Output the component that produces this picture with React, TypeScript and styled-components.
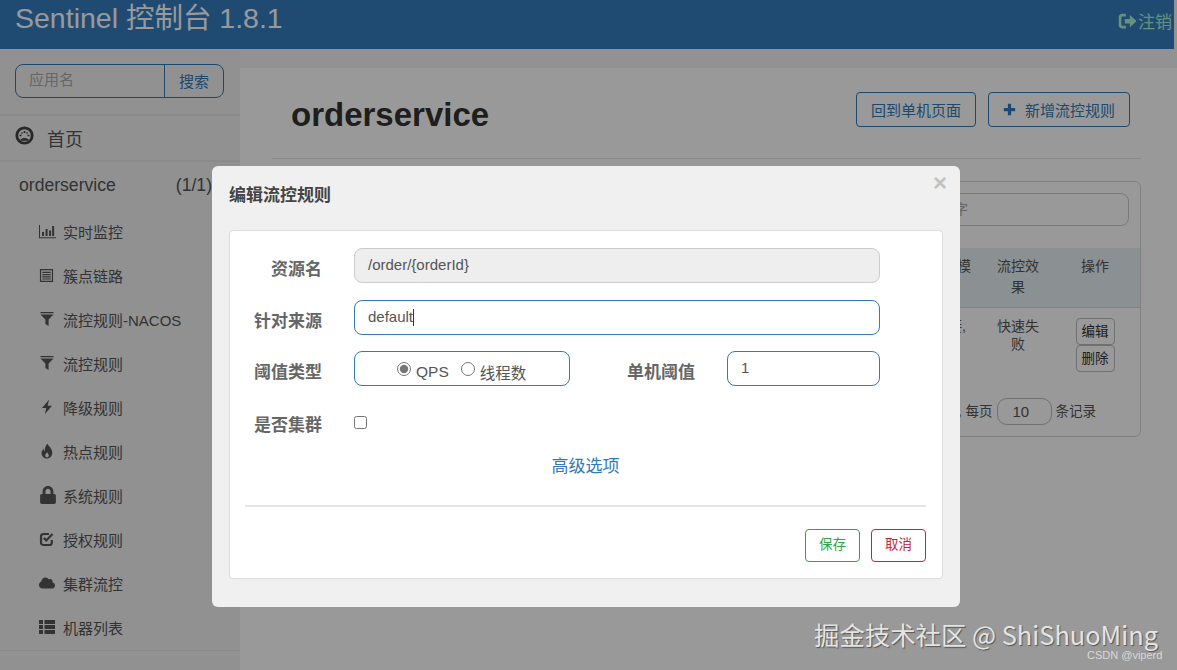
import React from 'react';
import styled, { createGlobalStyle } from 'styled-components';
import { FaLock, FaCloud } from 'react-icons/fa';

const FONT = `"Liberation Sans", "Noto Sans CJK SC", sans-serif`;

const Global = createGlobalStyle`
  html, body { margin: 0; padding: 0; }
  body { font-family: ${FONT}; background: #fff; overflow: hidden; }
  * { box-sizing: border-box; }
`;

const Page = styled.div`
  position: relative;
  width: 1177px;
  height: 670px;
  overflow: hidden;
  display: flex;
  flex-direction: column;
  background: #f4f4f4;
`;
const Navbar = styled.header`
  height: 49px;
  margin-right: 3px;
  padding: 0 2px 0 15px;
  background: #347cbf;
  display: flex;
  align-items: flex-start;
  justify-content: space-between;
  flex-shrink: 0;
`;
const Brand = styled.div`
  font-size: 28.5px;
  line-height: 37px;
  color: #fff;
`;
const Logout = styled.div`
  display: flex;
  align-items: center;
  gap: 2px;
  margin-top: 2px;
  height: 36px;
  font-size: 17px;
  color: #aef0d2;
`;
const Body = styled.div`
  flex: 1;
  display: flex;
  min-height: 0;
`;
const Sidebar = styled.aside`
  width: 240px;
  flex-shrink: 0;
  background: #f2f2f2;
  display: flex;
  flex-direction: column;
`;
const SearchBox = styled.div`
  display: flex;
  height: 34px;
  margin: 15px 16px 16px 15px;
  border: 1px solid #337ab7;
  border-radius: 8px;
  font-size: 15px;
`;
const SearchInput = styled.div`
  width: 149px;
  padding-left: 13px;
  line-height: 29px;
  color: #aaa;
  border-right: 1px solid #337ab7;
`;
const SearchBtn = styled.div`
  flex: 1;
  text-align: center;
  line-height: 33px;
  color: #337ab7;
`;
const HomeRow = styled.div`
  height: 48px;
  border-top: 2px solid #e8e8e8;
  border-bottom: 2px solid #e8e8e8;
  display: flex;
  align-items: center;
  padding-left: 15px;
  gap: 13px;
  font-size: 18px;
  color: #555;
  svg { margin-top: -5px; }
`;
const AppRow = styled.div`
  height: 47px;
  display: flex;
  align-items: center;
  justify-content: space-between;
  padding: 0 28px 0 19px;
  font-size: 17.6px;
  color: #555;
`;
const Menu = styled.nav`
  display: flex;
  flex-direction: column;
  padding-bottom: 1px;
  border-bottom: 1px solid #e4e4e4;
`;
const MenuItem = styled.div`
  height: 44px;
  display: flex;
  align-items: center;
  padding-left: 39px;
  font-size: 15px;
  color: #555;
`;
const MenuIcon = styled.span`
  width: 24px;
  display: flex;
  align-items: center;
  color: #555;
`;
const Main = styled.main`
  flex: 1;
  margin-top: 19px;
  background: #fff;
  padding: 0 36px 0 32px;
`;
const Header = styled.div`
  height: 71px;
  margin-top: 20px;
  padding-left: 19px;
  padding-right: 11px;
  border-bottom: 1px solid #e4e4e4;
  display: flex;
  justify-content: space-between;
`;
const Title = styled.h1`
  margin: 0;
  padding-top: 7px;
  font-size: 33px;
  line-height: 40px;
  font-weight: 700;
  color: #333;
`;
const Actions = styled.div`
  display: flex;
  gap: 12px;
  margin-top: 4px;
`;
const OutlineBtn = styled.div`
  height: 35px;
  padding: 0 14px;
  display: flex;
  align-items: center;
  gap: 9px;
  font-size: 15px;
  color: #337ab7;
  border: 1px solid #337ab7;
  border-radius: 4px;
`;
const Panel = styled.section`
  margin-top: 22px;
  height: 256px;
  border: 1px solid #d6d6d6;
  border-radius: 6px;
  display: flex;
  flex-direction: column;
`;
const PanelSearch = styled.div`
  height: 33px;
  margin: 11px 11px 22px 11px;
  padding-right: 160px;
  border: 1px solid #ccc;
  border-radius: 8px;
  text-align: right;
  font-size: 14px;
  line-height: 31px;
  color: #aaa;
`;
const TableRow = styled.div<{ $head?: boolean }>`
  display: grid;
  grid-template-columns: 1fr 60px 76px 78px 6px;
  font-size: 14px;
  line-height: ${p => (p.$head ? '21px' : '18px')};
  color: #555;
  text-align: center;
  height: ${p => (p.$head ? '60px' : '90px')};
  padding-top: ${p => (p.$head ? '8px' : '9px')};
  background: ${p => (p.$head ? '#e8f0f4' : 'transparent')};
  border-bottom: ${p => (p.$head ? '1px solid #d6d6d6' : 'none')};
`;
const Cell = styled.div<{ $pad?: number }>`
  padding: 0 ${p => p.$pad ?? 5}px;
`;
const OpCell = styled.div`
  display: flex;
  flex-direction: column;
  align-items: center;
  margin-top: 1px;
`;
const MiniBtn = styled.div`
  width: 39px;
  height: 27px;
  font-size: 13.5px;
  line-height: 25px;
  color: #333;
  border: 1px solid #bbb;
  border-radius: 4px;
`;
const Pager = styled.div`
  display: flex;
  align-items: center;
  justify-content: flex-end;
  padding-right: 44px;
  font-size: 13.5px;
  color: #555;
  gap: 4px;
`;
const PagerText = styled.span`
  margin-bottom: 4px;
`;
const PageSize = styled.div`
  width: 55px;
  height: 27px;
  border: 1px solid #bbb;
  border-radius: 10px;
  font-size: 15px;
  line-height: 25px;
  padding-left: 15px;
`;

const Overlay = styled.div`
  position: absolute;
  inset: 0;
  background: rgba(0, 0, 0, 0.4);
  padding: 166px 0 0 212px;
`;
const Modal = styled.div`
  position: relative;
  width: 748px;
  height: 441px;
  background: #f0f0f0;
  border-radius: 6px;
  padding: 18px 17px 28px;
  display: flex;
  flex-direction: column;
`;
const ModalTitle = styled.div`
  font-size: 17px;
  font-weight: 700;
  line-height: 24px;
  height: 47px;
  color: #444;
`;
const Close = styled.div`
  position: absolute;
  top: 3px;
  right: 13px;
  font-size: 24px;
  line-height: 28px;
  font-weight: 700;
  color: #c2c2c2;
`;
const Card = styled.div`
  flex: 1;
  background: #fff;
  border: 1px solid #ddd;
  border-radius: 4px;
  padding: 17px 16px 16px 15px;
  display: flex;
  flex-direction: column;
`;
const Row = styled.div<{ $mb: number }>`
  display: flex;
  align-items: center;
  height: 35px;
  margin-bottom: ${p => p.$mb}px;
`;
const Label = styled.div<{ $w?: number }>`
  width: ${p => p.$w ?? 77}px;
  flex-shrink: 0;
  margin-top: 3px;
  text-align: right;
  font-size: 17px;
  font-weight: 700;
  color: #666;
`;
const Field = styled.div<{ $w?: number; $off?: boolean }>`
  ${p => (p.$w ? `width: ${p.$w}px;` : 'flex: 1; margin-right: 46px;')}
  height: 35px;
  margin-left: 32px;
  padding-left: 13px;
  font-size: 15px;
  line-height: 32px;
  color: #555;
  border: 1px solid ${p => (p.$off ? '#ccc' : '#337ab7')};
  border-radius: 8px;
  background: ${p => (p.$off ? '#eee' : '#fff')};
`;
const Caret = styled.span`
  display: inline-block;
  width: 1px;
  height: 17px;
  vertical-align: -4px;
  background: #333;
`;
const RadioBox = styled.div`
  width: 216px;
  height: 35px;
  margin-left: 32px;
  padding-left: 42px;
  border: 1px solid #337ab7;
  border-radius: 8px;
  display: flex;
  align-items: center;
  font-size: 15.5px;
  color: #555;
`;
const RadioOption = styled.label`
  display: flex;
  align-items: center;
  gap: 5px;
  margin-right: 12px;
  span { margin-top: 6px; }
`;
const Radio = styled.input`
  width: 14px;
  height: 14px;
  margin: 0;
  accent-color: #777;
`;
const Check = styled.input`
  width: 13px;
  height: 13px;
  margin: 2px 0 0 32px;
`;
const AdvancedLink = styled.div`
  text-align: center;
  font-size: 17px;
  line-height: 24px;
  color: #337ab7;
  margin-top: -5px;
`;
const Rule = styled.div`
  height: 2px;
  margin-top: 26px;
  background: #e5e5e5;
`;
const Footer = styled.div`
  display: flex;
  justify-content: flex-end;
  gap: 11px;
  margin-top: 22px;
`;
const FootBtn = styled.div<{ $c: string }>`
  width: 55px;
  height: 33px;
  text-align: center;
  font-size: 13.5px;
  line-height: 30px;
  color: ${p => p.$c};
  border: 1px solid ${p => p.$c};
  border-radius: 4px;
`;
const Watermark = styled.div`
  position: absolute;
  left: 814px;
  top: 617px;
  font-family: "Noto Sans CJK SC", "Noto Sans", sans-serif;
  font-size: 25.4px;
  line-height: 34px;
  white-space: nowrap;
  color: #e4e4e4;
  text-shadow: 1px 1px 1px #555;
`;
const Credit = styled.div`
  position: absolute;
  left: 1087px;
  top: 648px;
  font-size: 11px;
  line-height: 14px;
  color: #d8d8d8;
`;

const Ico: React.FC<{ children: React.ReactNode; s?: number }> = ({ children, s = 16 }) => (
  <svg width={s} height={s} viewBox="0 0 16 16" fill="currentColor">{children}</svg>
);

const Gauge = () => (
  <svg width="19" height="19" viewBox="0 0 19 19" fill="none">
    <circle cx="9.5" cy="9.5" r="7.7" stroke="#444" strokeWidth="2.8" />
    <path d="M4.5 9.5h2M12.5 9.5h2M6.5 6.5l1 1M12.5 6.5l-1 1M9.5 5v2" stroke="#444" strokeWidth="1.6" />
    <path d="M5.5 13.2c2.4-1.6 5.6-1.6 8 0v1.6h-8z" fill="#444" />
  </svg>
);
const Stats = () => (
  <Ico s={17}><path d="M0 2h1v12h16v1H0zM3 9h2v4H3zM6.5 6h2v7h-2zM10 7.5h2V13h-2zM13 3h2v10h-2z" transform="scale(.95)" /></Ico>
);
const ListAlt = () => (
  <Ico s={15}><path fillRule="evenodd" d="M1 1h14v14H1zM2.3 2.3v11.4h11.4V2.3zM3.5 4h9v1.2h-9zM3.5 6.4h9v1.2h-9zM3.5 8.8h9V10h-9zM3.5 11.1h9v1.2h-9z" /></Ico>
);
const Filter = () => (
  <Ico s={16}><path d="M1.5 1h13v1.2h-13zM1.5 3.4h13L9.6 8.6V15L6.4 13V8.6z" /></Ico>
);
const Bolt = () => (
  <Ico s={16}><path d="M10 .8L3 9h4.2l-1.4 6.2L13 6.8H8.6z" /></Ico>
);
const Flame = () => (
  <Ico s={16}><path fillRule="evenodd" d="M8.5.5c.6 2.6 4.8 4.6 4.8 9.2 0 3.4-2.4 5.8-5.3 5.8S2.6 13.2 2.6 10.2c0-1.8.8-3.2 1.9-4.4.1 1.3.5 2.1 1.3 2.6C5.5 5.2 6.6 2.6 8.5.5zM8 9c-.3 1.2-1.8 2-1.8 3.6 0 1.1.8 1.9 1.8 1.9s1.8-.8 1.8-1.9C9.8 11 8.3 10.2 8 9z" /></Ico>
);
const CheckSq = () => (
  <svg width="16" height="16" viewBox="0 0 16 16" fill="none" stroke="currentColor" strokeWidth="2.2">
    <path d="M12.8 9v2.4c0 1.5-1 2.6-2.5 2.6H4.5C3 14 2 12.9 2 11.4V5.6C2 4.1 3 3 4.5 3H10" />
    <path d="M4.8 7l2.4 2.4L13.5 3" />
  </svg>
);
const ThList = () => (
  <Ico s={16}><path d="M0 1h4v4H0zM5.5 1H16v4H5.5zM0 6h4v4H0zM5.5 6H16v4H5.5zM0 11h4v4H0zM5.5 11H16v4H5.5z" /></Ico>
);
const LogOut = () => (
  <Ico s={18}><path d="M7 2.5v2.4H4.2c-.7 0-1.2.5-1.2 1.2v5.8c0 .7.5 1.2 1.2 1.2H7v2.4H3.6C1.9 15.5.6 14.2.6 12.5v-7c0-1.7 1.3-3 3-3z" /><path d="M6 7h4.5V3.6L16.7 9l-6.2 5.4V11H6z" /></Ico>
);
const Plus = () => (
  <Ico s={13}><path d="M6 1h4v5h5v4h-5v5H6v-5H1V6h5z" /></Ico>
);

const items: [React.ReactNode, string][] = [
  [<Stats />, '实时监控'],
  [<ListAlt />, '簇点链路'],
  [<Filter />, '流控规则-NACOS'],
  [<Filter />, '流控规则'],
  [<Bolt />, '降级规则'],
  [<Flame />, '热点规则'],
  [<FaLock size={18} />, '系统规则'],
  [<CheckSq />, '授权规则'],
  [<FaCloud size={16} />, '集群流控'],
  [<ThList />, '机器列表'],
];

export default function App() {
  return (
    <>
      <Global />
      <Page>
        <Navbar>
          <Brand>Sentinel 控制台 1.8.1</Brand>
          <Logout><LogOut />注销</Logout>
        </Navbar>
        <Body>
          <Sidebar>
            <SearchBox>
              <SearchInput>应用名</SearchInput>
              <SearchBtn>搜索</SearchBtn>
            </SearchBox>
            <HomeRow><Gauge />首页</HomeRow>
            <AppRow><span>orderservice</span><span>(1/1)</span></AppRow>
            <Menu>
              {items.map(([icon, text]) => (
                <MenuItem key={text}>
                  <MenuIcon>{icon}</MenuIcon>
                  {text}
                </MenuItem>
              ))}
            </Menu>
          </Sidebar>
          <Main>
            <Header>
              <Title>orderservice</Title>
              <Actions>
                <OutlineBtn>回到单机页面</OutlineBtn>
                <OutlineBtn><Plus />新增流控规则</OutlineBtn>
              </Actions>
            </Header>
            <Panel>
              <PanelSearch>关键字</PanelSearch>
              <TableRow $head>
                <Cell>资源名</Cell>
                <Cell>流控模式</Cell>
                <Cell $pad={13}>流控效果</Cell>
                <Cell>操作</Cell>
              </TableRow>
              <TableRow>
                <Cell>/order/&#123;orderId&#125;</Cell>
                <Cell>直接,</Cell>
                <Cell $pad={13}>快速失败</Cell>
                <OpCell>
                  <MiniBtn>编辑</MiniBtn>
                  <MiniBtn>删除</MiniBtn>
                </OpCell>
              </TableRow>
              <Pager>
                <PagerText>共 1 条记录, 每页</PagerText>
                <PageSize>10</PageSize>
                <PagerText>条记录</PagerText>
              </Pager>
            </Panel>
          </Main>
        </Body>
        <Overlay>
          <Modal>
            <ModalTitle>编辑流控规则</ModalTitle>
            <Close>×</Close>
            <Card>
              <Row $mb={17}>
                <Label>资源名</Label>
                <Field $off>/order/&#123;orderId&#125;</Field>
              </Row>
              <Row $mb={16}>
                <Label>针对来源</Label>
                <Field>default<Caret /></Field>
              </Row>
              <Row $mb={18}>
                <Label>阈值类型</Label>
                <RadioBox>
                  <RadioOption><Radio type="radio" name="t" defaultChecked /><span>QPS</span></RadioOption>
                  <RadioOption><Radio type="radio" name="t" /><span>线程数</span></RadioOption>
                </RadioBox>
                <Label $w={125}>单机阈值</Label>
                <Field $w={153}>1</Field>
              </Row>
              <Row $mb={21}>
                <Label>是否集群</Label>
                <Check type="checkbox" />
              </Row>
              <AdvancedLink>高级选项</AdvancedLink>
              <Rule />
              <Footer>
                <FootBtn $c="#28a745">保存</FootBtn>
                <FootBtn $c="#c82333">取消</FootBtn>
              </Footer>
            </Card>
          </Modal>
        </Overlay>
        <Watermark>掘金技术社区 @ ShiShuoMing</Watermark>
        <Credit>CSDN @viperd</Credit>
      </Page>
    </>
  );
}
